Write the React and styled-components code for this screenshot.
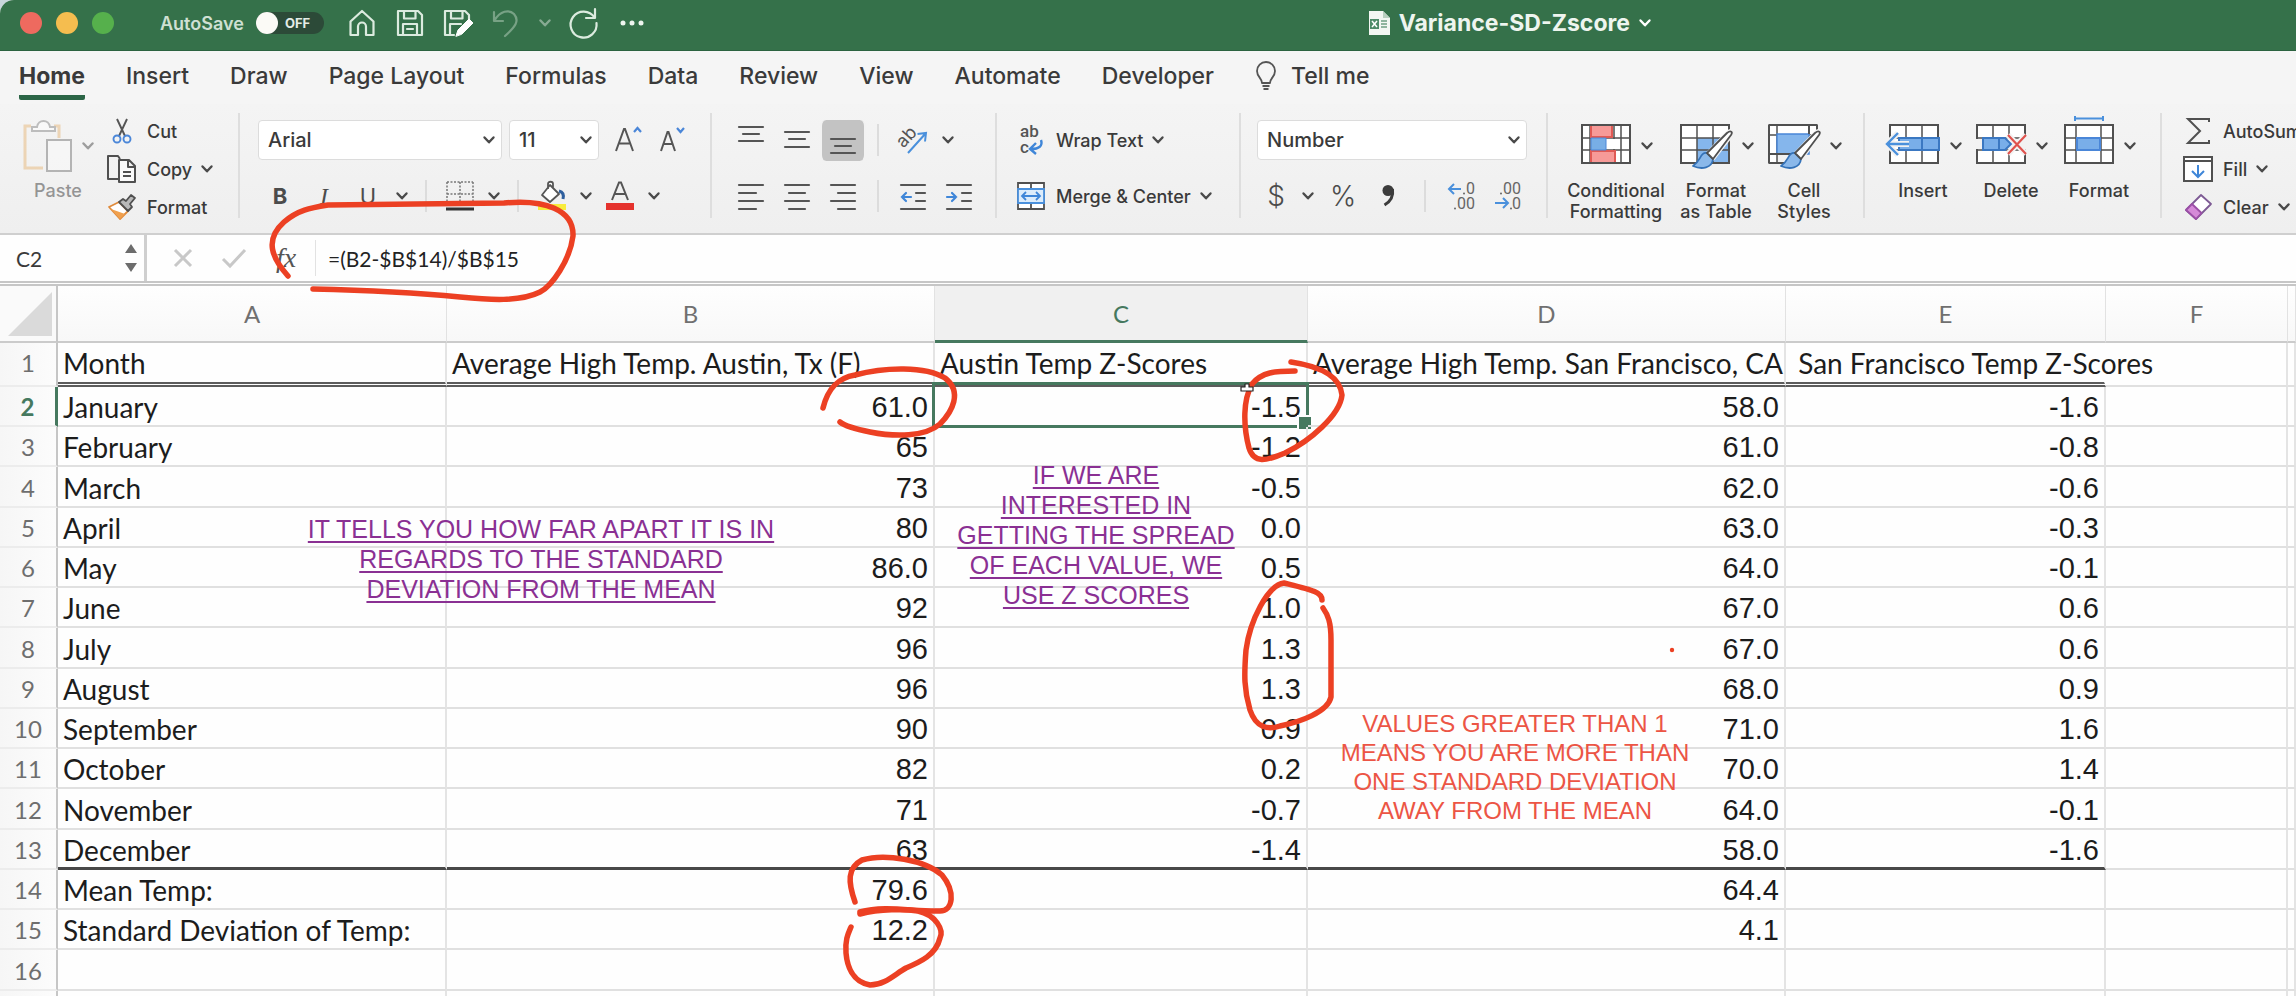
import React from "react";
import styled, { createGlobalStyle, css } from "styled-components";

const UI = `Inter, "Liberation Sans", sans-serif`;
const CELL = `Lato, "Liberation Sans", sans-serif`;
const NUM = `"Liberation Sans", sans-serif`;
const GREEN = "#46795f";

const Global = createGlobalStyle`
  * { box-sizing: border-box; }
  body { margin: 0; background: #c9d6dc; font-family: ${UI}; color: #3a3a3a; }
  button, input, select { font: inherit; color: inherit; border: 0; background: none; padding: 0; margin: 0; border-radius: 0; }
  svg { display: block; flex: none; overflow: visible; }
`;

const Window = styled.div`
  position: relative;
  display: flex;
  flex-direction: column;
  height: 100vh;
  overflow: hidden;
  border-top-left-radius: 14px;
  background: #fefefe;
`;

/* ---------- title bar ---------- */
const TitleBar = styled.header`
  display: flex;
  align-items: center;
  flex: none;
  height: 51px;
  padding: 0 645px 4px 20px;
  background: #35714a;
  border-bottom: 1px solid #2c6340;
  color: #eef5ef;
`;
const Lights = styled.div`
  display: flex;
  gap: 14px;
  width: 140px;
`;
const Light = styled.button`
  width: 22px;
  height: 22px;
  border-radius: 50%;
  background: ${(p) => p.$color};
`;
const AutoSave = styled.label`
  display: flex;
  align-items: center;
  gap: 12px;
  width: 187px;
  font-size: 18px;
  font-weight: 600;
  color: #cfe0d3;
`;
const Toggle = styled.span`
  display: flex;
  align-items: center;
  gap: 7px;
  width: 68px;
  height: 22px;
  border-radius: 11px;
  background: #2c4a38;
  font-size: 13px;
  font-weight: 700;
  color: #e4ece6;
  input {
    appearance: none;
    width: 22px;
    height: 22px;
    border-radius: 50%;
    background: #fbfaf6;
    margin: 0;
  }
`;
const QuickTools = styled.div`
  display: flex;
  align-items: center;
  gap: 18px;
`;
const QuickButton = styled.button`
  display: flex;
  width: ${(p) => p.$w || 30}px;
  justify-content: center;
  opacity: ${(p) => (p.$dim ? 0.4 : 1)};
`;
const FileName = styled.button`
  display: flex;
  align-items: center;
  gap: 9px;
  margin-left: auto;
  font-size: 23px;
  font-weight: 700;
  white-space: nowrap;
`;

/* ---------- ribbon tabs ---------- */
const Tabs = styled.nav`
  display: flex;
  flex: none;
  align-items: flex-start;
  gap: 41px;
  height: 53px;
  padding: 10px 19px 0;
  background: #f5f5f5;
`;
const Tab = styled.button`
  display: flex;
  align-items: center;
  gap: 14px;
  height: 39px;
  padding-bottom: 4px;
  white-space: nowrap;
  font-size: 23px;
  font-weight: ${(p) => (p.$active ? 700 : 500)};
  border-bottom: 5px solid ${(p) => (p.$active ? "#2b6546" : "transparent")};
  border-radius: 2px;
`;

/* ---------- ribbon ---------- */
const Ribbon = styled.div`
  display: flex;
  flex: none;
  padding: 9px 0 15px;
  background: linear-gradient(#f4f4f4, #efefef);
  border-bottom: 2px solid #cfcfcf;
  overflow: hidden;
`;
const Group = styled.section`
  display: flex;
  flex: none;
  flex-direction: ${(p) => (p.$row ? "row" : "column")};
  gap: ${(p) => (p.$row ? 4 : 16)}px;
  width: ${(p) => p.$w}px;
  height: 105px;
  padding: ${(p) => (p.$row ? 3 : 7)}px 0 0 ${(p) => p.$pad || 16}px;
  border-right: 2px solid ${(p) => (p.$last ? "transparent" : "#dedede")};
`;
const Row = styled.div`
  display: flex;
  align-items: center;
  height: 40px;
`;
const Slot = styled.button`
  display: flex;
  flex: none;
  align-items: center;
  justify-content: center;
  width: ${(p) => p.$w || 44}px;
  height: 41px;
  font-size: ${(p) => p.$size || 22}px;
  color: #4c4c4c;
  ${(p) =>
    p.$pressed &&
    css`
      border-radius: 6px;
      background: #c3c3c3;
      border: 0 solid #f2f2f2;
      border-width: 0 2px;
    `}
`;
const Symbol = styled(Slot)`
  font-size: 28px;
  font-weight: 300;
`;
const ItalicMark = styled.i`
  font-family: "Liberation Serif", serif;
  font-size: 24px;
`;
const Divider = styled.span`
  flex: none;
  width: ${(p) => p.$w || 24}px;
  height: 32px;
  background: linear-gradient(#dcdcdc, #dcdcdc) center / 2px 100% no-repeat;
`;
const Picker = styled.label`
  position: relative;
  display: flex;
  align-items: center;
  width: ${(p) => p.$w}px;
  height: 40px;
  margin-right: 7px;
  background: #fff;
  border: 1px solid #dcdcdc;
  border-radius: 4px;
  select {
    appearance: none;
    width: 100%;
    height: 38px;
    padding-left: 9px;
    font-size: 20px;
    font-weight: 500;
    outline: none;
  }
  svg {
    position: absolute;
    right: 6px;
    pointer-events: none;
  }
`;
const Command = styled.button`
  display: flex;
  align-items: center;
  gap: 9px;
  height: ${(p) => p.$h || 40}px;
  font-size: 18px;
  font-weight: 500;
  white-space: nowrap;
`;
const CommandIcon = styled.span`
  display: flex;
  justify-content: center;
  width: 32px;
`;
const Commands = styled.div`
  display: flex;
  flex-direction: column;
  gap: 16px;
  padding-top: 4px;
`;
const BigButton = styled.button`
  display: flex;
  flex: none;
  flex-direction: column;
  align-items: center;
  width: ${(p) => p.$w}px;
  font-size: 18px;
  line-height: 21px;
  font-weight: 500;
  opacity: ${(p) => (p.$dim ? 0.5 : 1)};
`;
const BigIcon = styled.span`
  display: flex;
  align-items: center;
  gap: 9px;
  height: 60px;
  margin-bottom: 4px;
`;

/* ---------- formula bar ---------- */
const FormulaBar = styled.div`
  display: flex;
  flex: none;
  align-items: center;
  height: 51px;
  background: #fefefe;
  border-bottom: 5px double #c6c6c6;
`;
const NameBox = styled.label`
  display: flex;
  align-items: center;
  width: 147px;
  height: 46px;
  padding: 0 6px 0 16px;
  border-right: 3px solid #cfcfcf;
  input {
    width: 100%;
    min-width: 0;
    font: 21px ${CELL};
  }
`;
const BarButton = styled.button`
  display: flex;
  justify-content: center;
  width: ${(p) => p.$w || 50}px;
`;
const FxButton = styled.button`
  width: 66px;
  padding-left: 8px;
  font: italic 28px "Liberation Serif", serif;
  color: #555;
`;
const FormulaInput = styled.input`
  && {
    flex: 1;
    min-width: 0;
    height: 36px;
    padding-left: 12px;
    border-left: 1px solid #e2e2e2;
    font: 21px ${CELL};
    color: #222;
  }
`;

/* ---------- sheet ---------- */
const SheetArea = styled.main`
  flex: 1;
  min-height: 0;
  overflow: hidden;
`;
const Sheet = styled.table`
  width: 100%;
  table-layout: fixed;
  border-collapse: separate;
  border-spacing: 0;
`;
const ColHead = styled.th`
  height: 57px;
  padding: 0;
  font: 24px ${CELL};
  color: ${(p) => (p.$active ? GREEN : "#707070")};
  background: ${(p) => (p.$active ? "#f0f0f0" : "linear-gradient(#fefefe, #f8f8f8)")};
  border-right: 1px solid #e2e2e2;
  border-bottom: ${(p) => (p.$active ? `3px solid ${GREEN}` : "2px solid #cbcbcb")};
`;
const Corner = styled.th`
  height: 57px;
  padding: 0 3px 0 8px;
  background: #fafafa;
  border-right: 2px solid #c6c6c6;
  border-bottom: 2px solid #cbcbcb;
`;
const RowHead = styled.th`
  padding: ${(p) => (p.$first ? "0 0 3px" : "2px 0 0")};
  line-height: 30px;
  font-family: ${CELL};
  font-size: 24px;
  font-weight: ${(p) => (p.$active ? 700 : 400)};
  color: ${(p) => (p.$active ? GREEN : "#6e6e6e")};
  background: linear-gradient(90deg, #f6f6f6, #fcfcfc);
  border-bottom: 2px solid #ececec;
  border-right: ${(p) => (p.$active ? `3px solid ${GREEN}` : "2px solid #c6c6c6")};
`;
const RULES = { double: "5px double #5c5c5c", strong: "3px solid #484848" };
const Line = styled.tr`
  height: ${(p) => p.$h}px;
`;
const Cell = styled.td`
  position: relative;
  padding: ${(p) => (p.$first ? "0 5px 0" : "2px 5px 0")};
  white-space: pre;
  line-height: 30px;
  color: #1c1c1c;
  font-family: ${(p) => (p.$num ? NUM : CELL)};
  font-size: ${(p) => (p.$num ? 29 : 28)}px;
  text-align: ${(p) => (p.$num ? "right" : "left")};
  border-right: 2px solid ${(p) => (p.$spill ? "transparent" : "#e4e4e4")};
  border-bottom: ${(p) => RULES[p.$rule] || "2px solid #e0e0e0"};
`;
const Selection = styled.span`
  position: absolute;
  inset: -5px -3px -3px -3px;
  border: 3px solid ${GREEN};
  &::after {
    content: "";
    position: absolute;
    right: -7px;
    bottom: -6px;
    width: 12px;
    height: 12px;
    background: ${GREEN};
    border: 2px solid #fff;
  }
`;

/* ---------- annotations ---------- */
const Note = styled.p`
  position: absolute;
  left: ${(p) => p.$x}px;
  top: ${(p) => p.$y}px;
  width: ${(p) => p.$w}px;
  margin: 0;
  text-align: center;
  font-family: ${NUM};
  font-size: ${(p) => (p.$red ? 24 : 25)}px;
  line-height: ${(p) => (p.$red ? 29 : 30)}px;
  color: ${(p) => (p.$red ? "#ec5545" : "#8a3093")};
  text-decoration: ${(p) => (p.$red ? "none" : "underline 2px")};
  text-underline-offset: 3px;
  text-decoration-skip-ink: none;
  white-space: nowrap;
  pointer-events: none;
`;
const Ink = styled.svg`
  position: absolute;
  left: 0;
  top: 0;
  pointer-events: none;
`;

/* ---------- icons ---------- */
const Caret = ({ c = "#4a4a4a" }) => (
  <svg width="12" height="8" viewBox="0 0 12 8" fill="none" stroke={c} strokeWidth="2.4" strokeLinecap="round" strokeLinejoin="round"><path d="M1.5 1.5 6 6.3 10.5 1.5" /></svg>
);
const W = { fill: "none", stroke: "#dcebdf", strokeWidth: 2.2, strokeLinejoin: "round", strokeLinecap: "round" };
const HomeIcon = () => <svg width="28" height="28" {...W}><path d="M2.5 12.5 14 2l11.500 10.500V26H18v-8.500a4 4 0 0 0-8 0V26H2.500Z" /></svg>;
const SaveIcon = () => <svg width="28" height="28" {...W}><path d="M2 2h20l4 4v20H2ZM8 2v7.500h11.500V2M7 26V15h14v11M11 20h6" /></svg>;
const SaveEditIcon = () => <svg width="30" height="28" {...W}><path d="M11 26H2V2h20l4 4v5M8 2v7.500h11.500V2M7 26V15h11" /><path d="M13 27l2-6L26 10l4 4-11 11Z" fill="#fff" stroke="#fff" strokeWidth="1" /></svg>;
const UndoIcon = () => <svg width="28" height="30" {...W}><path d="M2 4v9h9M2.500 12.500C8 3 17 1 22 6c6 7 1 13-9 22" /></svg>;
const RedoIcon = () => <svg width="32" height="30" {...W}><path d="M27 1v9h-9M26.500 9.500A13 13 0 1 0 28.500 15" /></svg>;
const DotsIcon = () => <svg width="24" height="6" fill="#eef5ef"><circle cx="3" cy="3" r="2.500" /><circle cx="12" cy="3" r="2.500" /><circle cx="21" cy="3" r="2.500" /></svg>;
const FileIcon = () => (
  <svg width="21" height="26"><path d="M0 1h14l7 7v17H0Z" fill="#f2f6f2" /><path d="M14 1v7h7Z" fill="#b8cfbf" /><path d="M1 9h9v10H1Z" fill="#4d8a68" /><path d="m3 11 5 6m0-6-5 6" stroke="#fff" strokeWidth="1.500" /><path d="M12 11h6M12 14h6M12 17h6" stroke="#6f9f83" strokeWidth="1.500" /></svg>
);
const BulbIcon = () => <svg width="22" height="28" fill="none" stroke="#555" strokeWidth="1.800" strokeLinejoin="round"><path d="M7 21c0-5-5-6-5-12a9 9 0 0 1 18 0c0 6-5 7-5 12ZM7.500 24h7M8.500 27h5" /></svg>;

const PasteIcon = () => (
  <svg width="50" height="54" fill="none" strokeWidth="2">
    <path d="M8 7H2v42h18M31 7h5v12" stroke="#e8b87a" strokeWidth="3" />
    <path d="M9 12V8h5c1-8 12-8 13 0h5v4Z" fill="#fff" stroke="#888" />
    <path d="M24 21h24v31H24Z" fill="#fafafa" stroke="#777" />
  </svg>
);
const CutIcon = () => (
  <svg width="20" height="26" fill="none" strokeWidth="1.900"><path d="M5 1l8 17M15 1 7 18" stroke="#555" /><circle cx="5" cy="21" r="3.500" stroke="#4a86d8" /><circle cx="15" cy="21" r="3.500" stroke="#4a86d8" /></svg>
);
const CopyIcon = () => (
  <svg width="30" height="28" fill="none" stroke="#505050" strokeWidth="2" strokeLinejoin="round"><path d="M11 24H1V1h10l2 3" /><path d="M12 5h10l6 6v16H12ZM21 5v7h7M16 17h8M16 21h8" fill="#fafafa" /></svg>
);
const PainterIcon = () => (
  <svg width="28" height="26" strokeWidth="1.800" strokeLinejoin="round"><path d="M1 13 11 8l9 9-8 8Z" fill="#fff" stroke="#e08b3c" /><path d="M3 15l14 5-5 5Z" fill="#f0a04e" /><path d="M11 8l4-3 3 2 5-6 4 3-5 6 2 3-4 4Z" fill="#b9b9b9" stroke="#505050" /></svg>
);
const Lines = ({ ys, spans, h = 40, children }) => (
  <svg width="26" height={h} stroke="#555" strokeWidth="2.200" fill="none" strokeLinecap="round">
    {ys.map((y, i) => <path key={y} d={`M${spans[i][0]} ${y}H${spans[i][1]}`} />)}
    {children}
  </svg>
);
const F = [1, 25], M = [5, 21];
const rowYs = [9, 17, 25, 33];
const BordersIcon = () => (
  <svg width="28" height="30" fill="none" stroke="#777" strokeWidth="1.500"><path d="M1 1h26M1 1v24M27 1v24M14 1v24M1 13h26" strokeDasharray="2 1.500" /><path d="M0 28h28" stroke="#333" strokeWidth="3" /></svg>
);
const FillIcon = () => (
  <svg width="30" height="30" fill="none" strokeWidth="1.800" strokeLinejoin="round"><path d="M13 4l9 9-9 8-8-7ZM11 8V3c0-3 5-3 5 0v4" fill="#fff" stroke="#555" /><path d="M22 10c4 1 5 4 4 8" stroke="#2e5f9e" strokeWidth="3" /><path d="M1 23h28v6H1Z" fill="#f8ec3c" /></svg>
);
const FontColorIcon = () => (
  <svg width="28" height="30"><path d="M6 19 13 1.500h2L22 19M8.500 13h11" fill="none" stroke="#555" strokeWidth="2" /><path d="M0 22h28v7H0Z" fill="#e5322d" /></svg>
);
const FontSizeIcon = ({ up }) => (
  <svg width="28" height="28" fill="none"><path d={up ? "M2 25 10 3h1l8 22M5 17.500h11" : "M3 25 9.500 6h1L17 25M5 18h10"} stroke="#555" strokeWidth="2" /><path d={up ? "M20 6l3.500-4L27 6" : "M19 2l3.500 4L26 2"} stroke="#4a86d8" strokeWidth="2.200" /></svg>
);
const OrientIcon = () => (
  <svg width="32" height="32" fill="none"><g transform="rotate(-48 11 14)"><text x="0" y="18" fontFamily="Inter, sans-serif" fontSize="18" fill="#555">ab</text></g><path d="M11 29 29 9M20.500 10 29 9l-1 8.500" stroke="#4a90dc" strokeWidth="2" /></svg>
);
const WrapIcon = () => (
  <svg width="28" height="30" fill="none" fontFamily="Roboto, sans-serif" fontSize="17"><text x="3" y="12" fill="#555">ab</text><text x="3" y="28" fill="#555">c</text><path d="M24 15c2 6-2 9-10 9M19 18l-6 6 6 5" stroke="#3f86d8" strokeWidth="2.400" /></svg>
);
const MergeIcon = () => (
  <svg width="28" height="28" fill="none" strokeWidth="1.800"><path d="M1 1h26v26H1ZM14 1v6M14 21v6" fill="#fff" stroke="#505050" /><path d="M1 7h26v14H1Z" fill="#dcecfb" stroke="#4a90dc" /><path d="M5 14h18M9 10l-4 4 4 4M19 10l4 4-4 4" stroke="#3f86d8" /></svg>
);
const DecimalIcon = ({ more }) => (
  <svg width="30" height="30" fontFamily="Roboto, sans-serif" fontSize="16" fill="#666">
    <text x={more ? 19 : 10} y="13">{more ? "0" : "00"}</text>
    <text x={more ? 10 : 19} y="28">{more ? "00" : "0"}</text>
    <path d={more ? "M14 8H2M7 3 2 8l5 5" : "M2 22h13M10 17l5 5-5 5"} fill="none" stroke="#4a90dc" strokeWidth="2" />
    <circle cx={more ? 17 : 8} cy="12.500" r="1" /><circle cx={more ? 8 : 18} cy="27.500" r="1" />
  </svg>
);
const Brush = () => (
  <g strokeLinejoin="round"><path d="M49 17c3-3 5-2 3 2L34 42l-5-4Z" fill="#fff" stroke="#f2f2f2" strokeWidth="5" /><path d="M28 37c-7-1-6 8-14 13 9 4 19 2 20-7Z" fill="#8ab8ea" stroke="#3472b8" strokeWidth="1.800" /><path d="M48 17c4-3 6-1 4 2L34 43l-6-6Z" fill="#fff" stroke="#505050" strokeWidth="1.800" /></g>
);
const G = { fill: "none", stroke: "#505050", strokeWidth: 2 };
const CondIcon = () => (
  <svg width="52" height="60" {...G}><path d="M2 9h48v38H2ZM2 22h48M2 34h48M10 9v38M34 9v38M41 9v38" fill="#fff" strokeWidth="1.500" /><path d="M11 9h21v12H11ZM11 35h24v12H11Z" fill="#f79a98" stroke="#e05a55" /><path d="M11 22h15v12H11Z" fill="#78aee6" stroke="#4a86d8" strokeWidth="1" /><path d="M27 23h13v10H27Z" fill="#fff" stroke="none" /><path d="M2 9h48v38H2Z" /></svg>
);
const TableIcon = () => (
  <svg width="54" height="60" {...G}><path d="M2 9h48v38H2Z" fill="#fff" stroke="none" /><path d="M18 22h32v25H18Z" fill="#85b6ec" stroke="none" /><path d="M2 22h48M2 34h48M18 9v38M34 9v38" strokeWidth="1.500" /><path d="M2 9h48v38H2Z" /><Brush /></svg>
);
const StylesIcon = () => (
  <svg width="54" height="60" {...G}><path d="M2 9h48v10H2ZM2 9h8v38H2Z" fill="#fff" strokeWidth="1.500" /><path d="M10 18h32v20H10Z" fill="#85b6ec" stroke="#4a86d8" strokeWidth="1.500" /><path d="M42 9v9M2 38h28M2 47h16M50 9v9M2 9h48M2 9v38" /><Brush /></svg>
);
const Grid4 = () => <g><path d="M2 9h48v38H2Z" fill="#fff" /><path d="M18 9v38M34 9v38M2 22h48M2 34h48" strokeWidth="1.500" /></g>;
const InsertIcon = () => (
  <svg width="56" height="60" {...G}><g transform="translate(3 0)"><Grid4 /></g><path d="M14 22h40v12H14Z" fill="#79aee9" stroke="#3b78c2" /><path d="M37 22v12" stroke="#3b78c2" /><path d="M24 28H2M13 17 2 28l11 11" stroke="#f2f2f2" strokeWidth="6" /><path d="M24 28H2M13 17 2 28l11 11" stroke="#4a90dc" strokeWidth="2.400" /></svg>
);
const DeleteIcon = () => (
  <svg width="52" height="60" {...G}><Grid4 /><path d="M0 23h52v10H0Z" fill="#f2f2f2" stroke="none" /><path d="M8 22h22l6 6-6 6H8Z" fill="#79aee9" stroke="#3b78c2" /><path d="M24 22v12" stroke="#3b78c2" /><path d="M33 19l18 19M51 19 33 38" stroke="#f2f2f2" strokeWidth="6" /><path d="M33 19l18 19M51 19 33 38" stroke="#e0524d" strokeWidth="2.200" /></svg>
);
const FormatIcon = () => (
  <svg width="52" height="60" {...G}><path d="M2 9h48v38H2Z" fill="#fff" /><path d="M13 9v38M38 9v38M2 22h48M2 34h48" strokeWidth="1.500" /><path d="M14 22h23v12H14Z" fill="#79aee9" stroke="#4a86d8" /><path d="M12 2.500h28M12 0v5M40 0v5" stroke="#4a90dc" /></svg>
);
const SigmaIcon = () => <svg width="24" height="28" {...G}><path d="M23 5V2H2l12 12L2 26h21v-3" /></svg>;
const FillDownIcon = () => <svg width="30" height="26" {...G}><path d="M1 1h28v24H1ZM1 5h28" fill="#fff" /><path d="M15 9v12M9 15l6 6 6-6" stroke="#3f86d8" /></svg>;
const ClearIcon = () => <svg width="28" height="28" strokeWidth="1.800" strokeLinejoin="round"><path d="M17 2 27 11 12 26 2 17Z" fill="#fff" stroke="#7d5a94" /><path d="M8 11 17.500 20 12 26 2 17Z" fill="#d58ad8" stroke="#9b4fa6" /></svg>;

/* ---------- data ---------- */
const TABS = ["Home", "Insert", "Draw", "Page Layout", "Formulas", "Data", "Review", "View", "Automate", "Developer"];
const COLS = ["A", "B", "C", "D", "E", "F", ""];
const ROWS = [
  ["Month", "Average High Temp. Austin, Tx (F)", "Austin Temp Z-Scores", "Average High Temp. San Francisco, CA", " San Francisco Temp Z-Scores"],
  ["January", "61.0", "-1.5", "58.0", "-1.6"],
  ["February", "65", "-1.2", "61.0", "-0.8"],
  ["March", "73", "-0.5", "62.0", "-0.6"],
  ["April", "80", "0.0", "63.0", "-0.3"],
  ["May", "86.0", "0.5", "64.0", "-0.1"],
  ["June", "92", "1.0", "67.0", "0.6"],
  ["July", "96", "1.3", "67.0", "0.6"],
  ["August", "96", "1.3", "68.0", "0.9"],
  ["September", "90", "0.9", "71.0", "1.6"],
  ["October", "82", "0.2", "70.0", "1.4"],
  ["November", "71", "-0.7", "64.0", "-0.1"],
  ["December", "63", "-1.4", "58.0", "-1.6"],
  ["Mean Temp:", "79.6", "", "64.4", ""],
  ["Standard Deviation of Temp:", "12.2", "", "4.1", ""],
  [],
  [],
];
const rowHeight = (n) => (n === 1 ? 44 : n % 4 === 0 ? 41 : 40);
const ruleFor = (n, c) => (c > 4 ? null : n === 1 ? "double" : n === 13 ? "strong" : null);

function SheetRow({ cells, n }) {
  return (
    <Line $h={rowHeight(n)}>
      <RowHead scope="row" $active={n === 2} $first={n === 1}>{n < 17 ? n : ""}</RowHead>
      {COLS.map((_, c) => (
        <Cell key={c} $num={n > 1 && c > 0} $first={n === 1} $rule={ruleFor(n, c)} $spill={n === 1 && c === 4}>
          {cells[c]}
          {n === 2 && c === 2 && <Selection />}
        </Cell>
      ))}
    </Line>
  );
}

export default function App() {
  return (
    <>
      <Global />
      <Window>
        <TitleBar>
          <Lights>
            <Light aria-label="Close" $color="#ee6a5f" />
            <Light aria-label="Minimize" $color="#f5bd4f" />
            <Light aria-label="Zoom" $color="#56b04c" />
          </Lights>
          <AutoSave>AutoSave<Toggle><input type="checkbox" />OFF</Toggle></AutoSave>
          <QuickTools>
            <QuickButton aria-label="Home"><HomeIcon /></QuickButton>
            <QuickButton aria-label="Save"><SaveIcon /></QuickButton>
            <QuickButton aria-label="Save as"><SaveEditIcon /></QuickButton>
            <QuickButton aria-label="Undo" $dim><UndoIcon /></QuickButton>
            <QuickButton aria-label="Undo history" $dim $w={12}><Caret c="#fff" /></QuickButton>
            <QuickButton aria-label="Redo"><RedoIcon /></QuickButton>
            <QuickButton aria-label="More"><DotsIcon /></QuickButton>
          </QuickTools>
          <FileName><FileIcon />Variance-SD-Zscore<Caret c="#fff" /></FileName>
        </TitleBar>

        <Tabs>
          {TABS.map((t) => <Tab key={t} $active={t === "Home"}>{t}</Tab>)}
          <Tab><BulbIcon />Tell me</Tab>
        </Tabs>

        <Ribbon>
          <Group $w={240} $row $pad={14}>
            <BigButton $w={88} $dim>
              <BigIcon><PasteIcon /><Caret /></BigIcon>Paste
            </BigButton>
            <Commands>
              <Command $h={22}><CommandIcon><CutIcon /></CommandIcon>Cut</Command>
              <Command $h={22}><CommandIcon><CopyIcon /></CommandIcon>Copy<Caret /></Command>
              <Command $h={22}><CommandIcon><PainterIcon /></CommandIcon>Format</Command>
            </Commands>
          </Group>

          <Group $w={472} $pad={18}>
            <Row>
              <Picker $w={244}><select aria-label="Font"><option>Arial</option></select><Caret /></Picker>
              <Picker $w={90}><select aria-label="Font size"><option>11</option></select><Caret /></Picker>
              <Slot aria-label="Increase font size"><FontSizeIcon up /></Slot>
              <Slot aria-label="Decrease font size"><FontSizeIcon /></Slot>
            </Row>
            <Row>
              <Slot><b>B</b></Slot>
              <Slot><ItalicMark>I</ItalicMark></Slot>
              <Slot>U</Slot>
              <Slot $w={24} aria-label="Underline style"><Caret /></Slot>
              <Divider />
              <Slot aria-label="Borders"><BordersIcon /></Slot>
              <Slot $w={24} aria-label="Border style"><Caret /></Slot>
              <Divider />
              <Slot aria-label="Fill color"><FillIcon /></Slot>
              <Slot $w={24} aria-label="Fill colors"><Caret /></Slot>
              <Slot aria-label="Font color"><FontColorIcon /></Slot>
              <Slot $w={24} aria-label="Font colors"><Caret /></Slot>
            </Row>
          </Group>

          <Group $w={285}>
            <Row>
              <Slot $w={46} aria-label="Top align"><Lines ys={[7, 14, 21]} spans={[F, M, F]} /></Slot>
              <Slot $w={46} aria-label="Middle align"><Lines ys={[12, 19, 27]} spans={[F, M, F]} /></Slot>
              <Slot $w={46} $pressed aria-label="Bottom align"><Lines ys={[19, 26, 33]} spans={[F, M, F]} /></Slot>
              <Divider />
              <Slot $w={46} aria-label="Orientation"><OrientIcon /></Slot>
              <Slot $w={24} aria-label="Orientation options"><Caret /></Slot>
            </Row>
            <Row>
              <Slot $w={46} aria-label="Align left"><Lines ys={rowYs} spans={[F, [1, 18], F, [1, 18]]} /></Slot>
              <Slot $w={46} aria-label="Center"><Lines ys={rowYs} spans={[F, M, F, M]} /></Slot>
              <Slot $w={46} aria-label="Align right"><Lines ys={rowYs} spans={[F, [8, 25], F, [8, 25]]} /></Slot>
              <Divider />
              <Slot $w={46} aria-label="Decrease indent"><Lines ys={rowYs} spans={[F, [16, 25], [16, 25], F]}><path d="M11 21H2M6 17l-4 4 4 4" stroke="#3f86d8" /></Lines></Slot>
              <Slot $w={46} aria-label="Increase indent"><Lines ys={rowYs} spans={[F, [16, 25], [16, 25], F]}><path d="M1 21h9M6 17l4 4-4 4" stroke="#3f86d8" /></Lines></Slot>
            </Row>
          </Group>

          <Group $w={244} $pad={18}>
            <Command><CommandIcon><WrapIcon /></CommandIcon>Wrap Text<Caret /></Command>
            <Command><CommandIcon><MergeIcon /></CommandIcon>Merge &amp; Center<Caret /></Command>
          </Group>

          <Group $w={307}>
            <Row>
              <Picker $w={270}><select aria-label="Number format"><option>Number</option></select><Caret /></Picker>
            </Row>
            <Row>
              <Symbol $w={38}>$</Symbol>
              <Slot $w={26} aria-label="Currency options"><Caret /></Slot>
              <Symbol>%</Symbol>
              <Slot $w={46} aria-label="Comma style"><svg width="16" height="24"><circle cx="8" cy="6.500" r="5.500" fill="#3c3c3c" /><path d="M12.500 5c1 7-1 12-8 16" fill="none" stroke="#3c3c3c" strokeWidth="3" /></svg></Slot>
              <Divider $w={28} />
              <Slot $w={46} aria-label="Increase decimal"><DecimalIcon more /></Slot>
              <Slot $w={46} aria-label="Decrease decimal"><DecimalIcon /></Slot>
            </Row>
          </Group>

          <Group $w={317} $row>
            <BigButton $w={104}><BigIcon><CondIcon /><Caret /></BigIcon>Conditional<br />Formatting</BigButton>
            <BigButton $w={88}><BigIcon><TableIcon /><Caret /></BigIcon>Format<br />as Table</BigButton>
            <BigButton $w={80}><BigIcon><StylesIcon /><Caret /></BigIcon>Cell<br />Styles</BigButton>
          </Group>

          <Group $w={297} $row>
            <BigButton $w={84}><BigIcon><InsertIcon /><Caret /></BigIcon>Insert</BigButton>
            <BigButton $w={84}><BigIcon><DeleteIcon /><Caret /></BigIcon>Delete</BigButton>
            <BigButton $w={84}><BigIcon><FormatIcon /><Caret /></BigIcon>Format</BigButton>
          </Group>

          <Group $w={180} $row $pad={20} $last>
            <Commands>
              <Command $h={22}><CommandIcon><SigmaIcon /></CommandIcon>AutoSum<Caret /></Command>
              <Command $h={22}><CommandIcon><FillDownIcon /></CommandIcon>Fill<Caret /></Command>
              <Command $h={22}><CommandIcon><ClearIcon /></CommandIcon>Clear<Caret /></Command>
            </Commands>
          </Group>
        </Ribbon>

        <FormulaBar>
          <NameBox>
            <input aria-label="Name box" defaultValue="C2" />
            <svg width="14" height="30" fill="#6c6c6c"><path d="M7 1l6 9H1ZM7 29l6-9H1Z" /></svg>
          </NameBox>
          <BarButton $w={72} aria-label="Cancel"><svg width="20" height="20" stroke="#c8c8c8" strokeWidth="3"><path d="M2 2l16 16M18 2 2 18" /></svg></BarButton>
          <BarButton $w={30} aria-label="Enter"><svg width="26" height="20" fill="none" stroke="#c8c8c8" strokeWidth="3"><path d="M2 11l7 7L24 2" /></svg></BarButton>
          <FxButton>fx</FxButton>
          <FormulaInput aria-label="Formula" defaultValue="=(B2-$B$14)/$B$15" />
        </FormulaBar>

        <SheetArea>
          <Sheet>
            <colgroup>
              <col width="58" /><col width="389" /><col width="488" /><col width="373" /><col width="478" /><col width="320" /><col width="182" /><col />
            </colgroup>
            <thead>
              <tr>
                <Corner aria-label="Select all"><svg width="44" height="44"><path d="M44 0v44H0Z" fill="#dadada" /></svg></Corner>
                {COLS.map((c) => <ColHead key={c} scope="col" $active={c === "C"}>{c}</ColHead>)}
              </tr>
            </thead>
            <tbody>
              {ROWS.map((cells, i) => <SheetRow key={i} cells={cells} n={i + 1} />)}
            </tbody>
          </Sheet>
        </SheetArea>

        <Note $x={301} $y={514} $w={480}>IT TELLS YOU HOW FAR APART IT IS IN<br />REGARDS TO THE STANDARD<br />DEVIATION FROM THE MEAN</Note>
        <Note $x={946} $y={460} $w={300}>IF WE ARE<br />INTERESTED IN<br />GETTING THE SPREAD<br />OF EACH VALUE, WE<br />USE Z SCORES</Note>
        <Note $red $x={1325} $y={709} $w={380}>VALUES GREATER THAN 1<br />MEANS YOU ARE MORE THAN<br />ONE STANDARD DEVIATION<br />AWAY FROM THE MEAN</Note>

        <Ink width="2296" height="996" fill="none" stroke="#ec4023" strokeWidth="5.500" strokeLinecap="round" strokeLinejoin="round">
          <path d="M288 276C272 258 264 240 284 222C298 210 310 208 328 205L504 203C545 199 574 210 573 236C570 260 552 286 540 292C520 302 490 300 460 297C410 292 360 290 313 289" />
          <path d="M823 408C828 388 838 378 855 375C885 367 925 366 945 378C963 392 952 412 940 424C925 437 895 437 870 432C855 429 845 426 840 422" />
          <path d="M1295 371C1275 371 1262 372 1252 384C1243 400 1243 425 1249 448C1254 464 1266 461 1285 453C1310 441 1340 415 1342 395C1340 378 1325 367 1291 362" />
          <path d="M1322 600C1322 592 1312 590 1284 583C1268 585 1250 620 1246 650C1244 675 1244 690 1250 710C1256 728 1268 730 1280 726C1300 722 1328 712 1331 697L1331 640C1331 622 1328 615 1323 608" />
          <path d="M855 902C848 882 847 868 862 860C885 853 925 860 942 875C956 892 953 911 940 911C915 912 885 905 860 912" />
          <path d="M860 914C880 909 905 909 918 911C936 915 944 930 940 938C936 955 920 962 906 968C895 974 885 985 870 985C852 982 847 965 846 953C845 940 848 934 851 927" />
          <circle cx="1672" cy="650" r="2.200" fill="#ec4023" stroke="none" />
          <path d="M1245 384h4v3h4v4h-12v-4h4Z" fill="#fff" stroke="#222" strokeWidth="1.200" />
        </Ink>
      </Window>
    </>
  );
}
